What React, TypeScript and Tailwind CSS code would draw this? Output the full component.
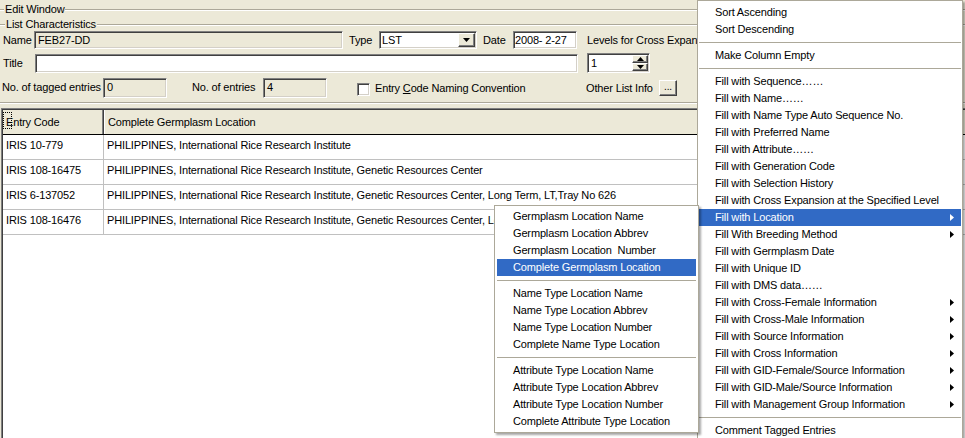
import React from "react";

const sunken =
  "border border-t-[#808080] border-l-[#808080] border-b-white border-r-white shadow-[inset_1px_1px_0_#404040,inset_-1px_-1px_0_#d4d0c8]";
const raised =
  "border border-t-white border-l-white border-b-[#404040] border-r-[#404040] shadow-[inset_-1px_-1px_0_#808080] bg-[#ECE9D8]";

function Etched({ className = "" }: { className?: string }) {
  return <div className={`h-[2px] border-t border-b border-t-[#aca899] border-b-white ${className}`} />;
}

function GroupLabel({ text, lead }: { text: string; lead: string }) {
  return (
    <div className="flex items-center h-[13px]">
      <Etched className={lead} />
      <span className="px-[1px] whitespace-nowrap">{text}</span>
      <Etched className="flex-1" />
    </div>
  );
}

function Tri({ down = false, color = "#000" }: { down?: boolean; color?: string }) {
  return down ? (
    <svg width="7" height="4" viewBox="0 0 7 4">
      <path d="M0 0H7L3.5 4Z" fill={color} />
    </svg>
  ) : (
    <svg width="7" height="4" viewBox="0 0 7 4">
      <path d="M0 4H7L3.5 0Z" fill={color} />
    </svg>
  );
}

function RightArrow({ color }: { color: string }) {
  return (
    <svg width="4" height="7" viewBox="0 0 4 7">
      <path d="M0 0L4 3.5L0 7Z" fill={color} />
    </svg>
  );
}

type MI = { t: string; arrow?: boolean; hl?: boolean } | "sep";

const mainItems: MI[] = [
  { t: "Sort Ascending" },
  { t: "Sort Descending" },
  "sep",
  { t: "Make Column Empty" },
  "sep",
  { t: "Fill with Sequence……" },
  { t: "Fill with Name……" },
  { t: "Fill with Name Type Auto Sequence No." },
  { t: "Fill with Preferred Name" },
  { t: "Fill with Attribute……" },
  { t: "Fill with Generation Code" },
  { t: "Fill with Selection History" },
  { t: "Fill with Cross Expansion at the Specified Level" },
  { t: "Fill with Location", arrow: true, hl: true },
  { t: "Fill With Breeding Method", arrow: true },
  { t: "Fill with Germplasm Date" },
  { t: "Fill with Unique ID" },
  { t: "Fill with DMS data……" },
  { t: "Fill with Cross-Female Information", arrow: true },
  { t: "Fill with Cross-Male Information", arrow: true },
  { t: "Fill with Source Information", arrow: true },
  { t: "Fill with Cross Information", arrow: true },
  { t: "Fill with GID-Female/Source Information", arrow: true },
  { t: "Fill with GID-Male/Source Information", arrow: true },
  { t: "Fill with Management Group Information", arrow: true },
  "sep",
  { t: "Comment Tagged Entries" },
  { t: "" },
];

const subItems: MI[] = [
  { t: "Germplasm Location Name" },
  { t: "Germplasm Location Abbrev" },
  { t: "Germplasm Location  Number" },
  { t: "Complete Germplasm Location", hl: true },
  "sep",
  { t: "Name Type Location Name" },
  { t: "Name Type Location Abbrev" },
  { t: "Name Type Location Number" },
  { t: "Complete Name Type Location" },
  "sep",
  { t: "Attribute Type Location Name" },
  { t: "Attribute Type Location Abbrev" },
  { t: "Attribute Type Location Number" },
  { t: "Complete Attribute Type Location" },
];

function MenuList({ items }: { items: MI[] }) {
  return (
    <>
      {items.map((it, i) =>
        it === "sep" ? (
          <div key={i} className="h-[9px] flex items-center">
            <div className="h-px w-full bg-[#aca899]" />
          </div>
        ) : (
          <div
            key={i}
            className={`h-[17px] flex items-center pl-[16px] pr-[7px] whitespace-pre ${
              it.hl ? "bg-[#316AC5] text-white" : "text-black"
            }`}
          >
            <span className="flex-1">{it.t}</span>
            {it.arrow && <RightArrow color={it.hl ? "#fff" : "#000"} />}
          </div>
        )
      )}
    </>
  );
}

const rows = [
  ["IRIS 10-779", "PHILIPPINES, International Rice Research Institute"],
  ["IRIS 108-16475", "PHILIPPINES, International Rice Research Institute, Genetic Resources Center"],
  [
    "IRIS 6-137052",
    "PHILIPPINES, International Rice Research Institute, Genetic Resources Center, Long Term, LT,Tray No 626",
  ],
  [
    "IRIS 108-16476",
    "PHILIPPINES, International Rice Research Institute, Genetic Resources Center, Long Term, LT,Tray No 626",
  ],
];

export default function App() {
  return (
    <div className="relative w-[965px] h-[438px] overflow-hidden bg-[#ECE9D8] text-black text-[11px] leading-[13px] tracking-[-0.15px] font-['Liberation_Sans',Arial,sans-serif] flex flex-col">
      <div className="mt-[3px]">
        <GroupLabel text="Edit Window" lead="w-[4px]" />
      </div>
      <div className="mt-[2px]">
        <GroupLabel text="List Characteristics" lead="w-[5px]" />
      </div>

      {/* Row 1 */}
      <div className="flex items-center h-[18px] whitespace-nowrap">
        <span className="ml-[3px] w-[31px]">Name</span>
        <div className={`${sunken} w-[309px] h-[18px] bg-[#ECE9D8] pl-[3px] flex items-center`}>FEB27-DD</div>
        <span className="w-[36px] pl-[6px]">Type</span>
        <div className={`${sunken} w-[98px] h-[18px] bg-white pl-[2px] flex items-center`}>
          <span className="flex-1">LST</span>
          <div className={`${raised} w-[17px] h-[14px] mr-[1px] flex items-center justify-center`}>
            <Tri down />
          </div>
        </div>
        <span className="w-[36px] pl-[6px]">Date</span>
        <div className={`${sunken} w-[64px] h-[18px] bg-white pl-[1px] flex items-center whitespace-pre`}>2008- 2-27</div>
        <span className="pl-[10px]">Levels for Cross Expansion</span>
      </div>

      {/* Row 2 */}
      <div className="flex items-center h-[20px] mt-[4px] whitespace-nowrap">
        <span className="ml-[3px] w-[32px]">Title</span>
        <div className={`${sunken} w-[543px] h-[19px] bg-white`} />
        <div className={`${sunken} ml-[9px] w-[63px] h-[20px] bg-white flex items-center pl-[3px]`}>
          <span className="flex-1">1</span>
          <div className="flex flex-col w-[16px] h-[16px] mr-[1px]">
            <div className={`${raised} h-[8px] flex items-center justify-center`}>
              <Tri />
            </div>
            <div className={`${raised} h-[8px] flex items-center justify-center`}>
              <Tri down />
            </div>
          </div>
        </div>
      </div>

      {/* Row 3 */}
      <div className="flex items-center h-[21px] mt-[4px] whitespace-nowrap">
        <span className="ml-[2px] w-[101px]">No. of tagged entries</span>
        <div className={`${sunken} w-[64px] h-[20px] bg-[#ECE9D8] pl-[3px] flex items-center`}>0</div>
        <span className="w-[96px] pl-[25px]">No. of entries</span>
        <div className={`${sunken} w-[64px] h-[20px] bg-[#ECE9D8] pl-[3px] flex items-center`}>4</div>
        <div className={`${sunken} ml-[30px] w-[13px] h-[13px] bg-white mt-[3px]`} />
        <span className="ml-[5px] w-[211px] mt-[2px]">
          Entry <span className="underline">C</span>ode Naming Convention
        </span>
        <span className="w-[73px] mt-[2px]">Other List Info</span>
        <div className={`${raised} w-[18px] h-[16px] flex items-center justify-center text-[10px] leading-[10px] pb-[2px]`}>
          ...
        </div>
      </div>

      <Etched className="mt-[4px]" />

      {/* Grid */}
      <div className="mt-[4px] ml-[1px] flex-1 border-t border-l border-[#808080] flex flex-col">
        <div className="flex-1 border-t border-l border-[#404040] bg-white flex flex-col">
          <div className="flex h-[25px] bg-[#ECE9D8] border-b border-black">
            <div className="relative w-[101px] border-r border-[#404040] shadow-[inset_-1px_0_0_#808080] pl-[3px] pt-[6px]">
              <div className="absolute left-0 top-[2px] w-[9px] h-[17px] border border-dotted border-black" />
              Entry Code
            </div>
            <div className="flex-1 pl-[3px] pt-[6px] border-l border-white">Complete Germplasm Location</div>
          </div>
          {rows.map((r, i) => (
            <div key={i} className="flex h-[25px] border-b border-[#c0c0c0] whitespace-nowrap">
              <div className="w-[101px] border-r border-[#c0c0c0] pl-[3px] pt-[4px]">{r[0]}</div>
              <div className="flex-1 pl-[3px] pt-[4px] overflow-hidden">{r[1]}</div>
            </div>
          ))}
        </div>
      </div>

      {/* Main context menu */}
      <div className="absolute left-[697px] top-0 w-[266px] bg-white border border-[#aca899] px-[1px] pt-[3px] shadow-[2px_2px_2px_rgba(0,0,0,0.35)]">
        <MenuList items={mainItems} />
      </div>

      {/* Submenu */}
      <div className="absolute left-[494px] top-[205px] w-[205px] bg-white border border-[#aca899] p-[2px] shadow-[2px_2px_2px_rgba(0,0,0,0.35)]">
        <MenuList items={subItems} />
      </div>
    </div>
  );
}
